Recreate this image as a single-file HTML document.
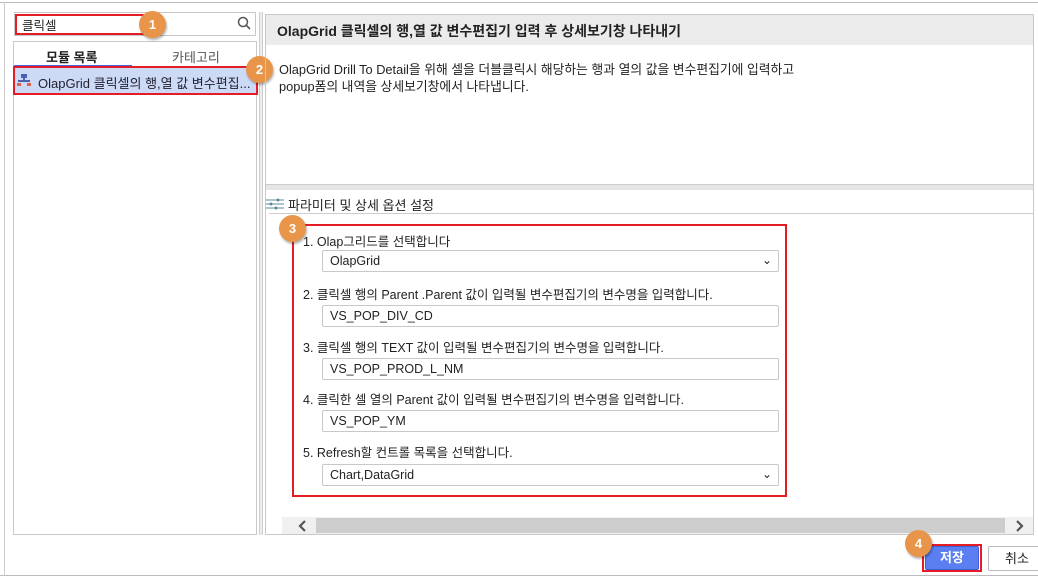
<!DOCTYPE html>
<html><head><meta charset="utf-8"><style>
*{box-sizing:border-box;margin:0;padding:0}
body{width:1038px;height:577px;background:#fff;font-family:"Liberation Sans","Noto Sans CJK KR",sans-serif;font-size:12px;color:#222;position:relative;overflow:hidden}
.a{position:absolute}
.badge{position:absolute;width:27px;height:27px;border-radius:50%;background:#e8954a;color:#fff;font-weight:bold;font-size:13px;text-align:center;line-height:27px;box-shadow:1px 2px 2px rgba(0,0,0,.3)}
.lbl{position:absolute;left:303px;font-size:12.5px;color:#222}
.inp{position:absolute;left:322px;width:457px;height:22px;border:1px solid #c8c8c8;border-radius:2px;padding-left:7px;line-height:20px;font-size:12.5px;background:#fff}
.chev{position:absolute;right:6px;top:-1px;font-size:12px}
</style></head><body>
<div class="a" style="left:0;top:2px;width:1038px;height:1px;background:#bbb"></div>
<div class="a" style="left:0;top:575px;width:1038px;height:1px;background:#bbb"></div>
<div class="a" style="left:4px;top:2px;width:1px;height:574px;background:#ccc"></div>
<!-- left panel -->
<div class="a" style="left:13px;top:41px;width:244px;height:494px;border:1px solid #c8c8c8"></div>
<div class="a" style="left:14px;top:12px;width:242px;height:24px;border:1px solid #c8c8c8;background:#fff"></div>
<div class="a" style="left:15px;top:14px;width:146px;height:21px;border:2px solid #e51c24"></div>
<div class="a" style="left:22px;top:15px;font-size:12.5px">클릭셀</div>
<svg class="a" style="left:237px;top:16px" width="14" height="14"><circle cx="6" cy="6" r="4.5" fill="none" stroke="#555" stroke-width="1.5"/><line x1="9.3" y1="9.3" x2="13" y2="13" stroke="#555" stroke-width="1.6"/></svg>
<div class="badge" style="left:139px;top:11px">1</div>
<div class="a" style="left:46px;top:47px;font-weight:bold;font-size:13px">모듈 목록</div>
<div class="a" style="left:172px;top:47px;font-size:13px;color:#555">카테고리</div>
<div class="a" style="left:14px;top:65px;width:118px;height:3px;background:#4a63d9"></div>
<div class="a" style="left:14px;top:68px;width:242px;height:26px;background:#ccdaf6"></div>
<div class="a" style="left:13px;top:66px;width:245px;height:29px;border:2px solid #e51c24"></div>
<svg class="a" style="left:17px;top:73px" width="14" height="14"><rect x="4" y="1" width="6" height="4" fill="#4a63b0"/><rect x="6" y="5" width="2" height="3" fill="#4a63b0"/><rect x="1" y="7" width="12" height="2" fill="#4a63b0"/><rect x="0" y="10" width="4" height="3" fill="#e0604a"/><rect x="10" y="10" width="4" height="3" fill="#e0604a"/></svg>
<div class="a" style="left:38px;top:73px;font-size:13px;color:#223;white-space:nowrap">OlapGrid 클릭셀의 행,열 값 변수편집...</div>
<!-- splitter -->
<div class="a" style="left:259px;top:12px;width:4px;height:523px;border-left:1px solid #ccc;border-right:1px solid #ccc;background:#eee"></div>
<div class="badge" style="left:246px;top:56px">2</div>
<!-- right -->
<div class="a" style="left:265px;top:14px;width:769px;height:521px;border:1px solid #c8c8c8"></div>
<div class="a" style="left:266px;top:15px;width:767px;height:30px;background:#ebebeb"></div>
<div class="a" style="left:277px;top:21px;font-weight:bold;font-size:14px;white-space:nowrap">OlapGrid 클릭셀의 행,열 값 변수편집기 입력 후 상세보기창 나타내기</div>
<div class="a" style="left:279px;top:61px;font-size:12.8px;line-height:17px;white-space:nowrap">OlapGrid Drill To Detail을 위해 셀을 더블클릭시 해당하는 행과 열의 값을 변수편집기에 입력하고<br>popup폼의 내역을 상세보기창에서 나타냅니다.</div>
<div class="a" style="left:266px;top:184px;width:767px;height:6px;background:#e6e6e6;border-top:1px solid #ccc"></div>
<svg class="a" style="left:266px;top:197px" width="18" height="14"><g stroke="#5b8a9a" stroke-width="1"><line x1="0" y1="3" x2="18" y2="3"/><line x1="0" y1="7" x2="18" y2="7"/><line x1="0" y1="11" x2="18" y2="11"/></g><circle cx="12" cy="3" r="1.5" fill="#5b8a9a"/><circle cx="5" cy="7" r="1.5" fill="#5b8a9a"/><circle cx="10" cy="11" r="1.5" fill="#5b8a9a"/></svg>
<div class="a" style="left:288px;top:195px;font-size:13px;white-space:nowrap">파라미터 및 상세 옵션 설정</div>
<div class="a" style="left:269px;top:213px;width:764px;height:1px;background:#ccc"></div>
<div class="a" style="left:292px;top:224px;width:495px;height:273px;border:2px solid #e51c24"></div>
<div class="badge" style="left:279px;top:215px">3</div>
<div class="lbl" style="top:231px">1. Olap그리드를 선택합니다</div>
<div class="inp" style="top:250px">OlapGrid<span class="chev">⌄</span></div>
<div class="lbl" style="top:284px">2. 클릭셀 행의 Parent .Parent 값이 입력될 변수편집기의 변수명을 입력합니다.</div>
<div class="inp" style="top:305px">VS_POP_DIV_CD</div>
<div class="lbl" style="top:337px">3. 클릭셀 행의 TEXT 값이 입력될 변수편집기의 변수명을 입력합니다.</div>
<div class="inp" style="top:358px">VS_POP_PROD_L_NM</div>
<div class="lbl" style="top:389px">4. 클릭한 셀 열의 Parent 값이 입력될 변수편집기의 변수명을 입력합니다.</div>
<div class="inp" style="top:410px">VS_POP_YM</div>
<div class="lbl" style="top:442px">5. Refresh할 컨트롤 목록을 선택합니다.</div>
<div class="inp" style="top:464px">Chart,DataGrid<span class="chev">⌄</span></div>
<!-- scrollbar -->
<div class="a" style="left:282px;top:517px;width:751px;height:17px;background:#f0f0f0"></div>
<div class="a" style="left:316px;top:518px;width:689px;height:15px;background:#cdcdcd"></div>
<svg class="a" style="left:298px;top:520px" width="10" height="12"><path d="M7 1 L2 6 L7 11" fill="none" stroke="#555" stroke-width="2.2"/></svg>
<svg class="a" style="left:1014px;top:520px" width="10" height="12"><path d="M3 1 L8 6 L3 11" fill="none" stroke="#555" stroke-width="2.2"/></svg>
<!-- buttons -->
<div class="a" style="left:922px;top:544px;width:60px;height:28px;border:2px solid #e51c24"></div>
<div class="a" style="left:925px;top:546px;width:54px;height:24px;background:#5b7ff0;border:1px solid #3c5fd6;border-radius:2px;color:#fff;font-weight:bold;font-size:13px;text-align:center;line-height:22px">저장</div>
<div class="badge" style="left:905px;top:530px">4</div>
<div class="a" style="left:988px;top:546px;width:52px;height:25px;border:1px solid #bbb;border-radius:2px;background:#fff;font-size:13px;line-height:23px;padding-left:16px">취소</div>
</body></html>
